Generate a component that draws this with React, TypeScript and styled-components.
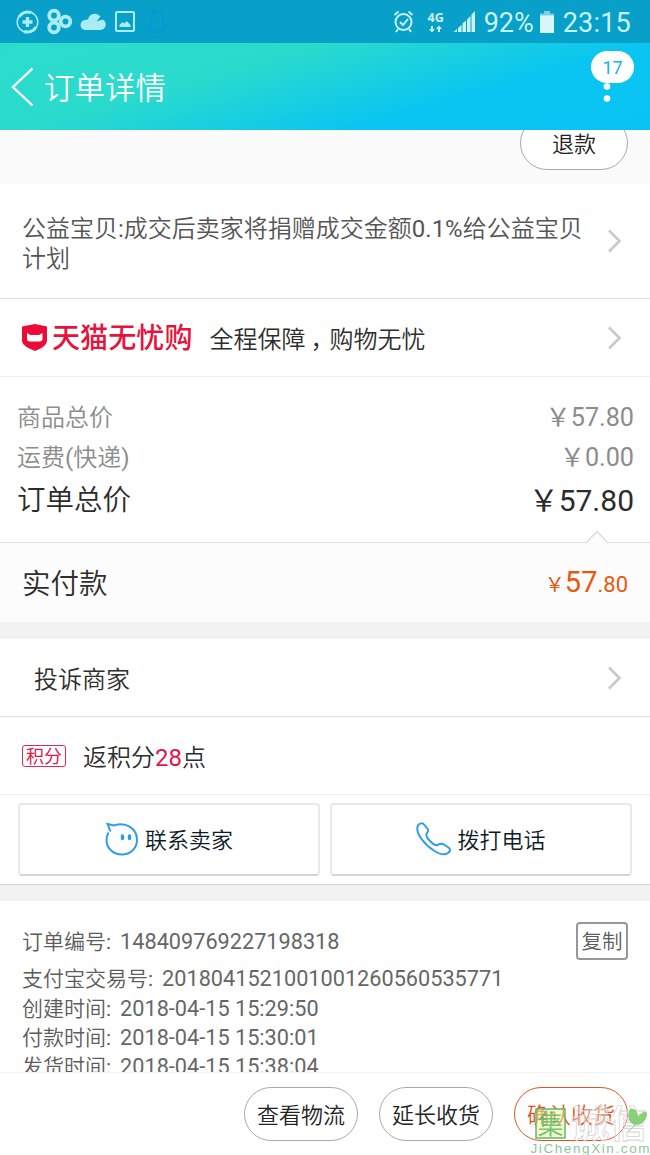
import React from 'react';
import styled, { createGlobalStyle } from 'styled-components';

const GlobalStyle = createGlobalStyle`
  * { box-sizing: border-box; }
  body {
    margin: 0;
    background: #fff;
    font-family: Roboto, "Noto Sans CJK SC", sans-serif;
    font-weight: 350;
    color: #2e2e2e;
  }
  svg { display: block; flex: none; }
`;

const Screen = styled.div`
  position: relative;
  width: 650px;
  height: 1155px;
  overflow: hidden;
  display: flex;
  flex-direction: column;
`;

const StatusBar = styled.div`
  flex: none;
  height: 43px;
  background: #089fc8;
  display: flex;
  justify-content: space-between;
  padding: 0 19px 0 15px;
  color: #c9f3f8;
`;

const StatusIcons = styled.div`
  display: flex;
  align-items: center;
`;

const StatusText = styled.span<{ $ml: number; $spacing?: number }>`
  font-size: 27px;
  font-weight: 400;
  line-height: 43px;
  padding-top: 3px;
  margin-left: ${p => p.$ml}px;
  letter-spacing: ${p => p.$spacing || 0}px;
`;

const Header = styled.header`
  flex: none;
  height: 87px;
  display: flex;
  align-items: center;
  justify-content: space-between;
  padding: 0 16px 0 11px;
  background: linear-gradient(164deg, #2cdccb 0%, #2adacd 34%, #0ac5f1 68%, #09c4f3 100%);
  color: #fff;
`;

const TitleGroup = styled.div`
  display: flex;
  align-items: center;
  gap: 10px;
`;

const Title = styled.h1`
  margin: 0;
  font-size: 30.5px;
  line-height: 40px;
  font-weight: 350;
  padding-top: 5px;
`;

const More = styled.div`
  display: flex;
  flex-direction: column;
  align-items: center;
  align-self: flex-start;
  padding-top: 8px;
  width: 43px;
`;

const Badge = styled.span`
  width: 43px;
  height: 32px;
  border-radius: 16px;
  background: #fff;
  color: #16b6dc;
  font-size: 18px;
  font-weight: 400;
  line-height: 34px;
  text-align: center;
`;

const Dots = styled.svg`
  margin: 0 11px 0 0;
`;

const RefundBar = styled.div`
  flex: none;
  height: 54px;
  overflow: hidden;
  background: #fafafa;
  display: flex;
  justify-content: flex-end;
  align-items: flex-end;
  padding: 0 22px 14px 0;
`;

const Pill = styled.button<{ $w: number; $tone?: string }>`
  flex: none;
  width: ${p => p.$w}px;
  height: 54px;
  padding: 0 0 3px;
  border: 1px solid ${p => p.$tone || '#aaa'};
  border-radius: 27px;
  background: #fff;
  color: ${p => p.$tone || '#222'};
  font: 350 22px Roboto, "Noto Sans CJK SC", sans-serif;
`;

const Row = styled.div<{ $h: number; $line?: string; $pl?: number }>`
  flex: none;
  height: ${p => p.$h}px;
  border-bottom: 1px solid ${p => p.$line || '#dfdfdf'};
  display: flex;
  align-items: center;
  padding: 0 28px 0 ${p => p.$pl ?? 22}px;
  background: #fff;
`;

const Donation = styled.p`
  margin: 0;
  padding-top: 5px;
  flex: 1;
  font-size: 24px;
  line-height: 30px;
  color: #555;
  white-space: pre-line;
`;

const Latin = styled.span`
  font-weight: 400;
`;

const Label = styled.span<{ $ml?: number; $size?: number }>`
  font-size: ${p => p.$size || 24}px;
  line-height: 36px;
  padding-top: 4px;
  margin-left: ${p => p.$ml || 0}px;
  white-space: pre;
`;

const Comma = styled.span`
  margin: 0 -5px 0 5px;
`;

const Grow = styled.span`
  flex: 1;
`;

const TmallName = styled.span`
  margin-left: 4px;
  padding-top: 3px;
  font-size: 28.1px;
  line-height: 40px;
  font-weight: 500;
  color: #e8133c;
`;

const Totals = styled.div`
  flex: none;
  height: 166px;
  border-bottom: 1px solid #e0e0e0;
  padding: 21px 16px 0 17px;
`;

const TotalLine = styled.div<{ $strong?: boolean }>`
  display: flex;
  justify-content: space-between;
  height: ${p => (p.$strong ? 46 : 40)}px;
  line-height: ${p => (p.$strong ? 46 : 40)}px;
  font-size: ${p => (p.$strong ? 28.5 : 24)}px;
  color: ${p => (p.$strong ? '#2c2c2c' : '#8c8c8c')};
`;

const Money = styled.span<{ $size: number }>`
  font-size: ${p => p.$size}px;
  font-weight: 400;
`;

const Paid = styled.div`
  flex: none;
  position: relative;
  height: 79px;
  background: #fcfcfc;
  display: flex;
  align-items: center;
  justify-content: space-between;
  padding: 0 22px;
`;

const Notch = styled.svg`
  position: absolute;
  top: -13px;
  right: 41px;
`;

const PaidAmount = styled.span`
  font-size: 22px;
  font-weight: 400;
  line-height: 36px;
  padding-top: 1px;
  color: #e8590c;
  i { font-style: normal; font-size: 20px; }
  b { font-weight: 400; font-size: 29px; }
`;

const Gap = styled.div<{ $h: number }>`
  flex: none;
  height: ${p => p.$h}px;
  background: #f2f2f2;
`;

const PointsTag = styled.span`
  width: 44px;
  height: 22px;
  border: 1px solid #e0275a;
  border-radius: 3px;
  color: #e0194e;
  font-size: 18px;
  font-weight: 400;
  line-height: 21px;
  text-align: center;
`;

const Red = styled.span`
  font-weight: 400;
  color: #e8114b;
`;

const ContactRow = styled.div`
  flex: none;
  height: 90px;
  border-bottom: 1px solid #d6d6d6;
  display: flex;
  gap: 10px;
  padding: 8px 18px;
`;

const ContactButton = styled.button`
  flex: 1;
  height: 73px;
  display: flex;
  align-items: center;
  justify-content: center;
  gap: 6px;
  padding: 0 0 2px;
  background: #fff;
  border: 2px solid #e9e9e9;
  border-bottom-color: #d6d6d6;
  border-radius: 4px;
  color: #0d1c28;
  font: 350 22px Roboto, "Noto Sans CJK SC", sans-serif;
`;

const ContactLabel = styled.span`
  padding-bottom: 1px;
`;

const Info = styled.section`
  flex: none;
  height: 171px;
  overflow: hidden;
  padding: 21px 22px 0;
  color: #5c5c5c;
  font-size: 21px;
`;

const InfoLine = styled.div<{ $h: number }>`
  display: flex;
  align-items: center;
  justify-content: space-between;
  height: ${p => p.$h}px;
  line-height: 29px;
  white-space: pre;
`;

const InfoText = styled.span<{ $drop?: number }>`
  padding-top: ${p => p.$drop || 0}px;
`;

const InfoValue = styled.span`
  margin-left: 9px;
  font-size: 21.7px;
  font-weight: 400;
  color: #666;
`;

const Copy = styled.button`
  width: 52px;
  height: 38px;
  margin-top: -1px;
  padding: 0 0 2px;
  background: #fff;
  border: 2px solid #979797;
  border-radius: 4px;
  color: #5c5c5c;
  font: 350 20.5px "Noto Sans CJK SC", sans-serif;
`;

const Footer = styled.footer`
  flex: none;
  height: 83px;
  border-top: 1px solid #f1f3f4;
  display: flex;
  justify-content: flex-end;
  gap: 21px;
  padding: 14px 22px 0;
  background: #fff;
`;

const Watermark = styled.div`
  position: absolute;
  right: 0;
  bottom: 0;
  width: 120px;
  height: 50px;
`;

const Arrow = () => (
  <svg width="15" height="24" viewBox="0 0 15 24" fill="none" stroke="#c9c9c9" strokeWidth="2.6">
    <path d="M2 1.500 L12.500 12 L2 22.500" />
  </svg>
);

const StatusLeft = () => (
  <svg width="160" height="43" viewBox="15 0 160 43" fill="none" stroke="#a9ecf5">
    <circle cx="27.500" cy="22" r="10.300" strokeWidth="1.5" />
    <path d="M19 17a10 10 0 0 1 12-4.500M36 27a10 10 0 0 1-12 4.500" strokeWidth="3" />
    <path d="M27.500 17v10M22.500 22h10" strokeWidth="3.4" />
    <g strokeWidth="3.800">
      <circle cx="54" cy="15.500" r="4.800" />
      <circle cx="54" cy="27.500" r="4.800" />
      <circle cx="65.500" cy="21.500" r="4.800" />
    </g>
    <path d="M86 30a5 5 0 0 1-1-10 5 5 0 0 1 3-.5 7 7 0 0 1 12.500-3l-4 5 6-2a5.500 5.500 0 0 1-2 10.500z" fill="#a9ecf5" stroke="none" />
    <rect x="116" y="12" width="18" height="19" rx="1" strokeWidth="2" />
    <path d="M119.500 27v-2l3-3 2 1.500 2-2.500 4 4v2z" fill="#a9ecf5" stroke="none" />
    <path d="M151 22c-1-7 1.500-11.500 6-11.500s7 4.500 6 11.500c2 2.500 3 5 2.500 7l-2.500-1.500-1.500 3 1 1.500h-4l-1.500-.8-1.500.8h-4l1-1.500-1.500-3-2.500 1.500c-.5-2 .5-4.500 2.500-7z" stroke="#0795dc" strokeWidth="1.600" />
  </svg>
);

const AlarmSignal = () => (
  <svg width="85" height="43" viewBox="392 0 85 43" fill="none" stroke="#c9f3f8">
    <circle cx="403.500" cy="22" r="8" strokeWidth="2" />
    <path d="M400 22l3 3 5-6M394.500 15l4-3.500M412.500 15l-4-3.500M398 29l-2 3M409 29l2 3" strokeWidth="1.900" />
    <text x="427.500" y="22" fill="#c9f3f8" stroke="none" fontFamily="Open Sans" fontSize="12.500" fontWeight="700">4G</text>
    <path d="M431 26h2v3h2l-3 3.500-3-3.500h2zM438 32h2v-3h2l-3-3.500-3 3.500h2z" fill="#c9f3f8" stroke="none" />
    <path d="M453.500 32l3.500-3v3zM458 28l3.500-3v7h-3.500zM462.500 23.500l3.500-3v11.500h-3.500zM467 19.500l3.500-3.500V32h-3.500zM471.500 14.500l3.500-3.500V32h-3.500z" fill="#c9f3f8" stroke="none" />
  </svg>
);

const Battery = () => (
  <svg width="14" height="22" viewBox="0 0 14 22">
    <path d="M0 2.500h4V0h6v2.500h4V22H0z" fill="#7ad0e2" />
    <path d="M0 4.500h14V22H0z" fill="#d8f6fa" />
  </svg>
);

const BatteryBox = styled.span`
  padding: 1px 0 0 6px;
`;

const orderTimes = [
  ['创建时间', '2018-04-15 15:29:50'],
  ['付款时间', '2018-04-15 15:30:01'],
  ['发货时间', '2018-04-15 15:38:04'],
];

export default function App() {
  return (
    <Screen>
      <GlobalStyle />
      <StatusBar>
        <StatusLeft />
        <StatusIcons>
          <AlarmSignal />
          <StatusText $ml={7}>92%</StatusText>
          <BatteryBox><Battery /></BatteryBox>
          <StatusText $ml={9} $spacing={0.2}>23:15</StatusText>
        </StatusIcons>
      </StatusBar>
      <Header>
        <TitleGroup>
          <svg width="23" height="40" viewBox="0 0 23 40" fill="none" stroke="#fff" strokeWidth="2.400">
            <path d="M21.500 1.500 L2 20 L21.500 38.500" />
          </svg>
          <Title>订单详情</Title>
        </TitleGroup>
        <More>
          <Badge>17</Badge>
          <Dots width="8" height="20" viewBox="0 0 8 20" fill="#fff">
            <circle cx="4" cy="3.500" r="3.300" />
            <circle cx="4" cy="15.500" r="3.300" />
          </Dots>
        </More>
      </Header>

      <RefundBar><Pill $w={108}>退款</Pill></RefundBar>
      <Row $h={115}>
        <Donation>公益宝贝<Latin>:</Latin>成交后卖家将捐赠成交金额<Latin>0.1%</Latin>给公益宝贝{'\n'}计划</Donation>
        <Arrow />
      </Row>
      <Row $h={78} $line="#efefef">
        <svg width="26" height="29" viewBox="0 0 26 29">
          <path d="M13 1L25 3.500v14c0 5-6 8-12 10.500C7 25.500 0 22.500 0 17.500v-14z" fill="#ed0a37" />
          <path d="M5 10l3.500 2h8.500l3.500-2v6c0 1.500-1 2.500-3 2.500h-9.500c-2 0-3-1-3-2.500z" fill="#fff" />
        </svg>
        <TmallName>天猫无忧购</TmallName>
        <Label $ml={17}>全程保障<Comma>，</Comma>购物无忧</Label>
        <Grow />
        <Arrow />
      </Row>
      <Totals>
        <TotalLine><span>商品总价</span><Money $size={25.2}>￥57.80</Money></TotalLine>
        <TotalLine><span>运费<Latin>(</Latin>快递<Latin>)</Latin></span><Money $size={25.2}>￥0.00</Money></TotalLine>
        <TotalLine $strong><span>订单总价</span><Money $size={30}>￥57.80</Money></TotalLine>
      </Totals>
      <Paid>
        <Notch width="24" height="14" viewBox="0 0 24 14" fill="#fcfcfc" stroke="#dcdcdc" strokeWidth="1.300">
          <path d="M1 13 L12 1.500 L23 13" />
        </Notch>
        <Label $size={28.5}>实付款</Label>
        <PaidAmount><i>￥</i><b>57</b>.80</PaidAmount>
      </Paid>
      <Gap $h={17} />
      <Row $h={78} $pl={34}>
        <Label>投诉商家</Label>
        <Grow />
        <Arrow />
      </Row>
      <Row $h={78} $line="#efefef">
        <PointsTag>积分</PointsTag>
        <Label $ml={17}>返积分<Red>28</Red>点</Label>
      </Row>
      <ContactRow>
        <ContactButton>
          <svg width="34" height="34" viewBox="0 0 34 34" fill="none" stroke="#2e9ee0" strokeWidth="2">
            <path d="M5.500 9.500L2.500 2l6.500 1.500C21-.5 32 6.500 32 18c0 8.500-7 14.500-15 14.500-9 0-15.500-6.500-15.500-14.500 0-3 .7-5 2-7.500" />
            <path d="M17.500 14v2.500M24.500 14v2.500" strokeWidth="3.400" strokeLinecap="round" />
          </svg>
          <ContactLabel>联系卖家</ContactLabel>
        </ContactButton>
        <ContactButton>
          <svg width="35" height="34" viewBox="0 0 35 34" fill="none" stroke="#2e9ee0" strokeWidth="2" strokeLinejoin="round">
            <path d="M2 3.500C3.500 1 6.500.5 8.500 3l3.500 4.500c1 1.500-.5 2.500-1.500 4.500-1 2 1 4.500 4 7.500s5 4.500 7 3.500 3.500-2 5.500-1l5.500 3.500c2.500 2 1.500 4-.5 5.500-3.500 2.500-9.500.5-13.500-2C9.500 23.500-1.500 11 2 3.500z" />
          </svg>
          <ContactLabel>拨打电话</ContactLabel>
        </ContactButton>
      </ContactRow>
      <Gap $h={16} />
      <Info>
        <InfoLine $h={39}>
          <InfoText $drop={1}>订单编号<Latin>:</Latin><InfoValue>148409769227198318</InfoValue></InfoText>
          <Copy>复制</Copy>
        </InfoLine>
        <InfoLine $h={33}>
          <InfoText $drop={2}>支付宝交易号<Latin>:</Latin><InfoValue>2018041521001001260560535771</InfoValue></InfoText>
        </InfoLine>
        {orderTimes.map(([name, time]) => (
          <InfoLine key={name} $h={29.3}>
            <InfoText>{name}<Latin>:</Latin><InfoValue>{time}</InfoValue></InfoText>
          </InfoLine>
        ))}
      </Info>
      <Footer>
        <Pill $w={114}>查看物流</Pill>
        <Pill $w={114}>延长收货</Pill>
        <Pill $w={114} $tone="#dc5520">确认收货</Pill>
      </Footer>
      <Watermark>
        <svg width="120" height="50" viewBox="530 1105 120 50">
          <rect x="536" y="1109" width="29" height="29" fill="#e6f79a" fillOpacity=".5" stroke="#64b568" strokeWidth="1.500" />
          <text x="537.500" y="1133.500" fontFamily="Noto Sans CJK SC" fontSize="26" fontWeight="400" fill="#4fae62" fillOpacity=".75">集</text>
          <text x="571" y="1137" fontFamily="Noto Sans CJK SC" fontSize="38" fontWeight="700" fill="#fff" fillOpacity=".4" stroke="#d4d4d4" strokeWidth=".8">诚信</text>
          <path d="M630 1109c4-2 8 2 8 8 3-5 9-7 9-3 0 6-5 11-11 11-7 0-10-10-6-16z" fill="#7ccc6c" fillOpacity=".9" />
          <path d="M638 1118c-2 7-5 10-10 13" fill="none" stroke="#8ecb7c" />
          <text x="530.500" y="1152.500" fontFamily="Liberation Sans" fontSize="13.500" fontWeight="400" textLength="119" fill="#8fc69c">JiChengXin.com</text>
        </svg>
      </Watermark>
    </Screen>
  );
}
